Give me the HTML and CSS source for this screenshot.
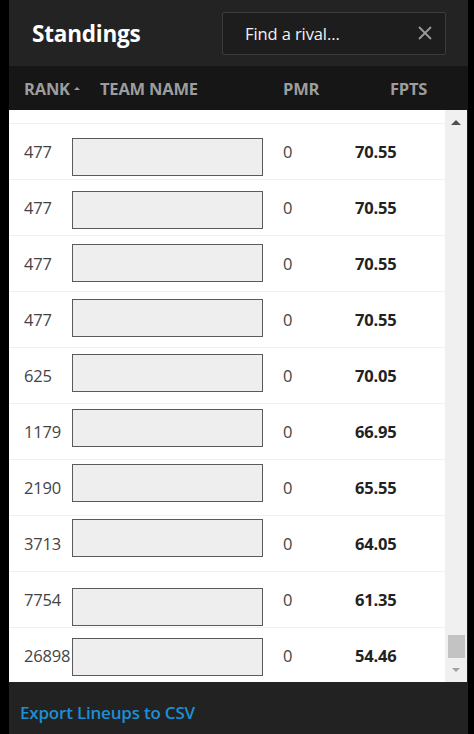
FILE: index.html
```html
<!DOCTYPE html>
<html>
<head>
    <meta charset="UTF-8">
    <title>Standings</title>
    <link rel="stylesheet" href="styles.css">
</head>
<body>
<div class="panel">
    <div class="top">
        <h2 class="title">Standings</h2>
        <div class="search">
            <span class="search-text">Find a rival...</span>
            <svg class="clear" width="14" height="14" viewBox="0 0 14 14">
                <path d="M1 1 L13 13 M13 1 L1 13" stroke="#9a9a9a" stroke-width="1.8" fill="none"/>
            </svg>
        </div>
    </div>

    <div class="cols">
        <span class="col-rank">RANK<i class="caret"></i></span>
        <span class="col-team">TEAM NAME</span>
        <span class="col-pmr">PMR</span>
        <span class="col-fpts">FPTS</span>
    </div>

    <div class="board">
        <div class="list">
            <div class="row-stub"></div>
            <div class="row"><span class="rank">477</span><span class="team"></span><span class="pmr">0</span><span class="fpts">70.55</span></div>
            <div class="row"><span class="rank">477</span><span class="team"></span><span class="pmr">0</span><span class="fpts">70.55</span></div>
            <div class="row"><span class="rank">477</span><span class="team"></span><span class="pmr">0</span><span class="fpts">70.55</span></div>
            <div class="row"><span class="rank">477</span><span class="team"></span><span class="pmr">0</span><span class="fpts">70.55</span></div>
            <div class="row"><span class="rank">625</span><span class="team"></span><span class="pmr">0</span><span class="fpts">70.05</span></div>
            <div class="row"><span class="rank">1179</span><span class="team"></span><span class="pmr">0</span><span class="fpts">66.95</span></div>
            <div class="row"><span class="rank">2190</span><span class="team"></span><span class="pmr">0</span><span class="fpts">65.55</span></div>
            <div class="row"><span class="rank">3713</span><span class="team"></span><span class="pmr">0</span><span class="fpts">64.05</span></div>
            <div class="row"><span class="rank">7754</span><span class="team"></span><span class="pmr">0</span><span class="fpts">61.35</span></div>
            <div class="row last"><span class="rank">26898</span><span class="team"></span><span class="pmr">0</span><span class="fpts">54.46</span></div>
        </div>
        <div class="scrollbar">
            <i class="arrow-up"></i>
            <i class="thumb"></i>
            <i class="arrow-down"></i>
        </div>
    </div>

    <div class="footer">
        <a href="#" class="export">Export Lineups to CSV</a>
    </div>
</div>
</body>
</html>
```

FILE: styles.css
```css
body {
    margin: 0;
    background: #000;
    font-family: "Open Sans", "Noto Sans", sans-serif;
}
.panel {
    margin-left: 9px;
    width: 459px;
    height: 734px;
    background: #1e1e1e;
    display: flex;
    flex-direction: column;
}
.top {
    height: 66px;
    background: #232323;
    display: flex;
    align-items: center;
    padding: 0 22px 0 23px;
}
.title {
    margin: 0;
    color: #fff;
    font-size: 22.5px;
    font-weight: 700;
    letter-spacing: -0.2px;
}
.search {
    margin-left: auto;
    width: 224px;
    height: 43px;
    box-sizing: border-box;
    border: 1px solid #3c3c3c;
    border-radius: 2px;
    background: #1d1d1d;
    display: flex;
    align-items: center;
    padding: 0 13px 0 22px;
}
.search-text {
    color: #f2f2f2;
    font-size: 16.5px;
    letter-spacing: -0.1px;
}
.clear {
    margin-left: auto;
}
.cols {
    height: 44px;
    background: #161616;
    display: flex;
    align-items: center;
    padding-left: 15px;
    color: #9d9d9d;
    font-size: 16.5px;
    font-weight: 700;
    letter-spacing: -0.2px;
}
.col-rank {
    width: 76px;
    display: flex;
    align-items: center;
}
.caret {
    display: inline-block;
    margin-left: 4px;
    border-left: 3px solid transparent;
    border-right: 3px solid transparent;
    border-bottom: 3px solid #9d9d9d;
}
.col-team {
    width: 183px;
}
.col-pmr {
    width: 107px;
}
.board {
    height: 572px;
    display: flex;
}
.list {
    width: 436px;
    background: #fff;
    overflow: hidden;
}
.row-stub {
    height: 13px;
    border-bottom: 1px solid #f1f1f1;
}
.row {
    height: 56px;
    box-sizing: border-box;
    border-bottom: 1px solid #f1f1f1;
    display: flex;
    align-items: center;
    padding-left: 15px;
    font-size: 16.5px;
}
.row.last {
    height: 55px;
    border-bottom: none;
}
.rank {
    width: 48px;
    color: #444;
    letter-spacing: -0.2px;
}
.team {
    width: 191px;
    height: 38px;
    box-sizing: border-box;
    border: 1px solid #5a5a5a;
    background: #eeeeee;
    align-self: flex-start;
    margin-right: 20px;
}
.row:nth-child(2) .team { margin-top: 14px; }
.row:nth-child(3) .team { margin-top: 11px; }
.row:nth-child(4) .team { margin-top: 8px; }
.row:nth-child(5) .team { margin-top: 7px; }
.row:nth-child(6) .team { margin-top: 6px; }
.row:nth-child(7) .team { margin-top: 5px; }
.row:nth-child(8) .team { margin-top: 4px; }
.row:nth-child(9) .team { margin-top: 3px; }
.row:nth-child(10) .team { margin-top: 16px; }
.row:nth-child(11) .team { margin-top: 10px; }
.pmr {
    width: 72px;
    color: #444;
}
.fpts {
    color: #222;
    font-weight: 700;
    letter-spacing: -0.2px;
}
.scrollbar {
    width: 22px;
    background: #f0f0f0;
    position: relative;
}
.arrow-up {
    position: absolute;
    left: 6px;
    top: 10px;
    border-left: 5px solid transparent;
    border-right: 5px solid transparent;
    border-bottom: 5px solid #505050;
}
.thumb {
    position: absolute;
    left: 3px;
    top: 525px;
    width: 17px;
    height: 23px;
    background: #c3c3c3;
}
.arrow-down {
    position: absolute;
    left: 7px;
    top: 558px;
    border-left: 4px solid transparent;
    border-right: 4px solid transparent;
    border-top: 4px solid #a3a3a3;
}
.footer {
    flex: 1;
    background: #222;
    display: flex;
    align-items: center;
    padding: 8px 0 0 11px;
}
.export {
    color: #1d8fd6;
    font-size: 17px;
    font-weight: 600;
    text-decoration: none;
    letter-spacing: -0.2px;
}
```
